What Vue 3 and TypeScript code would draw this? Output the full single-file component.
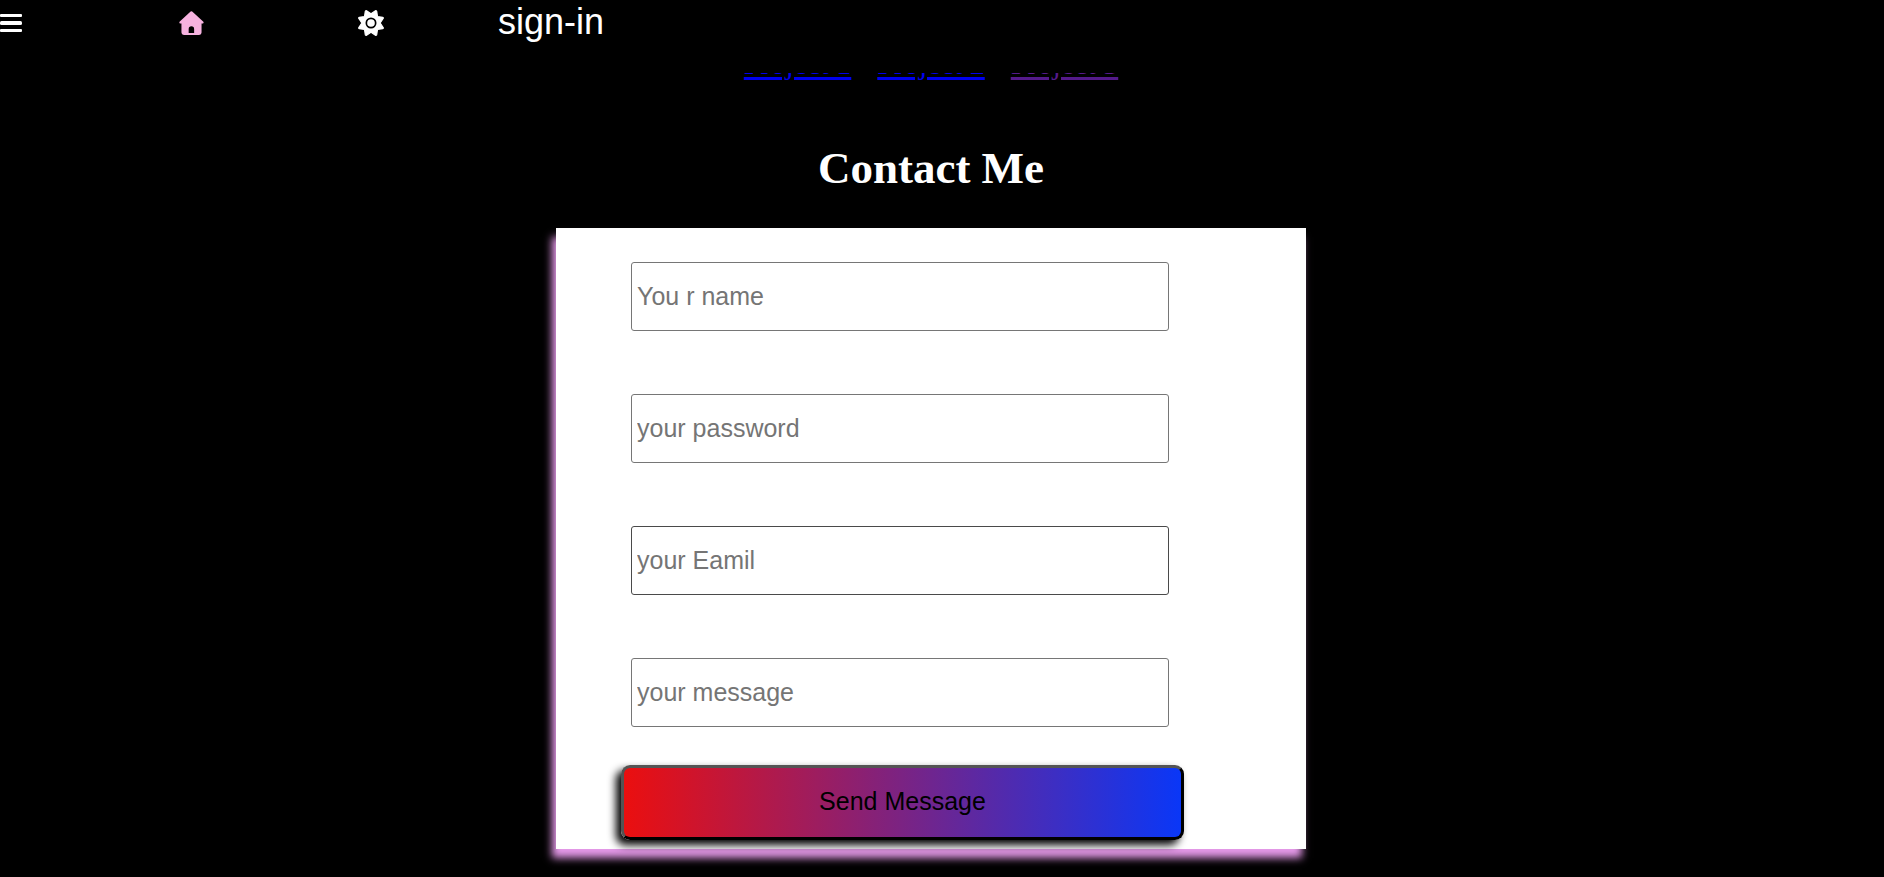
<script setup lang="ts">
interface Project {
  name: string
  visited: boolean
}

interface Field {
  id: string
  type: string
  placeholder: string
  active: boolean
}

const projects: Project[] = [
  { name: 'Project 1', visited: false },
  { name: 'Project 2', visited: false },
  { name: 'Project 3', visited: true },
]

const fields: Field[] = [
  { id: 'name', type: 'text', placeholder: 'You r name', active: false },
  { id: 'password', type: 'password', placeholder: 'your password', active: false },
  { id: 'email', type: 'email', placeholder: 'your Eamil', active: true },
  { id: 'message', type: 'text', placeholder: 'your message', active: false },
]
</script>

<template>
  <header class="topbar">
    <nav class="menu">
      <button class="icon-button" type="button" aria-label="Menu">
        <svg class="bars" viewBox="0 0 22 18" fill="currentColor" aria-hidden="true">
          <rect x="0" y="0" width="22" height="3" rx="1" />
          <rect x="0" y="7" width="22" height="4" rx="1.500" />
          <rect x="0" y="15" width="22" height="3" rx="1" />
        </svg>
      </button>
      <a class="icon-link home" href="#" aria-label="Home">
        <svg viewBox="0 0 25 24.6" fill="currentColor" aria-hidden="true">
          <path fill-rule="evenodd" d="M11.6.5a1.2 1.2 0 0 1 1.6 0L24.4 10.8c1 .9.4 2-.7 2H22.800V22a2.500 2.500 0 0 1-2.500 2.500H4.700A2.500 2.500 0 0 1 2.200 22v-9.200H1.200c-1.100 0-1.600-1.200-.7-2zM9.600 22.500h5.600v-4a2.800 2.800 0 0 0-5.600 0z" />
        </svg>
      </a>
      <a class="icon-link" href="#" aria-label="Theme">
        <svg viewBox="-6 -6 524 524" fill="currentColor" aria-hidden="true">
          <path stroke="currentColor" stroke-width="24" stroke-linejoin="round" d="M361.500 9c5 2.100 8.600 6.600 9.600 11.900L387 125l104 16c5.300 1 9.800 4.600 11.900 9.600s1.500 10.700-1.600 15.200L441 256l60.300 90.300c3.100 4.500 3.700 10.200 1.600 15.200s-6.600 8.600-11.900 9.600L387 387l-15.900 104c-1 5.300-4.600 9.800-9.600 11.900s-10.700 1.500-15.200-1.600L256 441l-90.300 60.300c-4.500 3.100-10.200 3.700-15.200 1.600s-8.600-6.600-9.600-11.900L125 387 20.900 371.100c-5.300-1-9.800-4.600-11.900-9.600s-1.500-10.700 1.600-15.200L71 256l-60.400-90.300c-3.100-4.500-3.700-10.200-1.600-15.200s6.600-8.600 11.900-9.600L125 125l15.900-104.100c1-5.300 4.600-9.800 9.600-11.900s10.700-1.500 15.200 1.600L256 71l90.300-60.400c4.500-3.100 10.200-3.700 15.200-1.600z" />
          <circle cx="256" cy="256" r="94" fill="none" stroke="#000" stroke-width="34" />
        </svg>
      </a>
      <a class="sign-in" href="#">sign-in</a>
    </nav>
  </header>

  <main class="page">
    <nav class="projects">
      <a
        v-for="project in projects"
        :key="project.name"
        href="#"
        class="project"
        :class="{ visited: project.visited }"
      >{{ project.name }}</a>
    </nav>

    <h2 class="title">Contact Me</h2>

    <form class="card" @submit.prevent>
      <input
        v-for="field in fields"
        :id="field.id"
        :key="field.id"
        class="field"
        :class="{ active: field.active }"
        :type="field.type"
        :placeholder="field.placeholder"
        :aria-label="field.placeholder"
      />
      <button class="send" type="submit">Send Message</button>
    </form>
  </main>
</template>

<style>
body {
  margin: 0;
  background: #000;
}
</style>

<style scoped>
.topbar {
  position: fixed;
  top: 0;
  left: 0;
  z-index: 1;
  width: 100%;
  height: 73px;
  background: #000;
  color: #fff;
  font-family: "Liberation Sans", Arial, sans-serif;
}

.menu {
  display: grid;
  grid-template-columns: 179px 179px 140px auto;
  justify-content: start;
  align-items: center;
  height: 46px;
}

.icon-button {
  display: flex;
  padding: 0;
  border: 0;
  background: none;
  color: inherit;
}

.icon-link {
  display: flex;
  color: inherit;
}

.icon-link svg {
  width: 26px;
  height: 26px;
}

.icon-link.home {
  color: #f6b2df;
}

.icon-link.home svg {
  width: 25px;
  height: 24px;
}

.icon-button .bars {
  width: 22px;
  height: 18px;
}

.sign-in {
  padding-bottom: 2px;
  color: inherit;
  font-size: 36px;
  line-height: 40px;
  text-decoration: none;
}

.page {
  display: flex;
  flex-direction: column;
  align-items: center;
  box-sizing: border-box;
  padding: 47px 22px 28px 0;
  font-family: "Liberation Serif", "Times New Roman", serif;
}

.projects {
  display: flex;
  gap: 26px;
  font-size: 30px;
  line-height: 34px;
}

.project {
  color: #0000ee;
  text-decoration-thickness: 3px;
  text-underline-offset: 3px;
}

.project.visited {
  color: #551a8b;
}

.title {
  margin: 61px 0 34px;
  color: #fff;
  font-size: 45px;
  line-height: 52px;
}

.card {
  display: flex;
  flex-direction: column;
  align-items: flex-start;
  box-sizing: border-box;
  width: 100%;
  max-width: 750px;
  padding: 34px 65px 9px;
  background: #fff;
  box-shadow: -4px 9px 8px #e599e9;
}

.field {
  box-sizing: border-box;
  width: 538px;
  max-width: 100%;
  height: 69px;
  margin: 0 10px 63px;
  padding: 1px 5px;
  border: 1px solid #767676;
  border-radius: 3px;
  background: #fff;
  font-family: "Liberation Sans", Arial, sans-serif;
  font-size: 25px;
}

.field:last-of-type {
  margin-bottom: 38px;
}

.field.active {
  border-color: #4a4a4a;
}

.field::placeholder {
  color: #757575;
  opacity: 1;
}

.send {
  box-sizing: border-box;
  width: 563px;
  max-width: 100%;
  height: 75px;
  padding: 0 6px 2px;
  border: 3px outset #000;
  border-radius: 9px;
  background: linear-gradient(to right, #eb0f0f, #0a37f7);
  box-shadow: -5px 5px 8px #000;
  color: #000;
  font-family: "Liberation Sans", Arial, sans-serif;
  font-size: 25px;
}
</style>
